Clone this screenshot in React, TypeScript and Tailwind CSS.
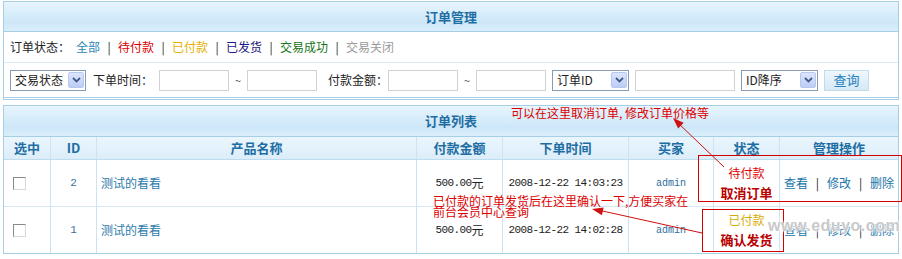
import React from "react";

const STATUS_LINKS = [
  { label: "全部", color: "text-[#2b87b5]" },
  { label: "待付款", color: "text-[#d80000]" },
  { label: "已付款", color: "text-[#e3b100]" },
  { label: "已发货", color: "text-[#191980]" },
  { label: "交易成功", color: "text-[#17761a]" },
  { label: "交易关闭", color: "text-[#9b9b9b]" },
];

const ORDERS = [
  {
    id: 2,
    name: "测试的看看",
    amount: "500.00",
    time: "2008-12-22 14:03:23",
    buyer: "admin",
    status: "待付款",
    statusColor: "text-[#e00000]",
    action: "取消订单",
  },
  {
    id: 1,
    name: "测试的看看",
    amount: "500.00",
    time: "2008-12-22 14:02:28",
    buyer: "admin",
    status: "已付款",
    statusColor: "text-[#d9ab00]",
    action: "确认发货",
  },
];

const COLS = "grid grid-cols-[46px_46px_320px_86px_126px_85px_66px_119px]";
const MONO = "font-['Liberation_Mono','DejaVu_Sans_Mono',monospace]";
const CELL = "flex items-center border-l border-[#cbe3f2]";

function Chevron() {
  return (
    <svg width="9" height="6" viewBox="0 0 9 6">
      <path d="M1 1 L4.5 4.5 L8 1" fill="none" stroke="#42598a" strokeWidth="1.8" />
    </svg>
  );
}

function FakeSelect({ label, width }: { label: string; width: string }) {
  return (
    <div
      className={`flex h-[21px] items-center justify-between border border-[#8a9bb5] bg-white pl-[4px] pr-[1px] ${width}`}
    >
      <span className="leading-none">{label}</span>
      <span className="flex h-[16px] w-[16px] items-center justify-center rounded-[2px] border border-[#b6c8ef] bg-[linear-gradient(#dbe5fc,#bccdf5)]">
        <Chevron />
      </span>
    </div>
  );
}

function TextBox({ width }: { width: string }) {
  return <div className={`h-[21px] border border-[#d2d2d2] bg-white ${width}`} />;
}

// arrow head triangle, tip at (tx,ty), line coming from (fx,fy)
function arrowHead(tx: number, ty: number, fx: number, fy: number, len = 11, half = 4) {
  const dx = tx - fx;
  const dy = ty - fy;
  const d = Math.hypot(dx, dy);
  const ux = dx / d;
  const uy = dy / d;
  const bx = tx - ux * len;
  const by = ty - uy * len;
  return `${tx},${ty} ${bx - uy * half},${by + ux * half} ${bx + uy * half},${by - ux * half}`;
}

export default function App() {
  return (
    <div className="relative h-[259px] w-[902px] overflow-hidden bg-white px-[3px] pt-[1px] font-['Noto_Sans_CJK_SC',sans-serif] text-[12px] text-[#222]">
      {/* 订单管理 */}
      <div className="border border-b-[3px] border-[#a6cfe6] [border-bottom-style:double]">
        <div className="flex h-[30px] items-center justify-center border-b border-[#a6cfe6] bg-[linear-gradient(#e7f5fd,#cde7f8_70%,#d9eefa)] text-[13px] font-bold text-[#1f6ea3]">
          订单管理
        </div>
        <div className="flex h-[31px] items-center border-b border-[#dbecf6] pl-[6px]">
          <span className="mr-[6px] w-[60px]">订单状态：</span>
          {STATUS_LINKS.map((item, i) => (
            <React.Fragment key={item.label}>
              {i > 0 && <span className="w-[18px] text-center">|</span>}
              <span className={item.color}>{item.label}</span>
            </React.Fragment>
          ))}
        </div>
        <div className="flex h-[34px] items-center pl-[6px]">
          <FakeSelect label="交易状态" width="w-[76px]" />
          <span className="ml-[7px] w-[60px]">下单时间：</span>
          <div className="ml-[6px]">
            <TextBox width="w-[70px]" />
          </div>
          <span className="w-[18px] text-center text-[11px] text-[#555]">~</span>
          <TextBox width="w-[70px]" />
          <span className="ml-[11px] w-[60px]">付款金额：</span>
          <TextBox width="w-[70px]" />
          <span className="w-[18px] text-center text-[11px] text-[#555]">~</span>
          <TextBox width="w-[70px]" />
          <div className="ml-[6px]">
            <FakeSelect label="订单ID" width="w-[77px]" />
          </div>
          <div className="ml-[6px]">
            <TextBox width="w-[100px]" />
          </div>
          <div className="ml-[6px]">
            <FakeSelect label="ID降序" width="w-[77px]" />
          </div>
          <button className="ml-[6px] flex h-[21px] w-[45px] items-center justify-center border border-[#c3dcec] bg-[linear-gradient(#eef7fc,#d5e9f6)] text-[13px] text-[#2680bd]">
            查询
          </button>
        </div>
      </div>

      {/* 订单列表 */}
      <div className="mt-[5px] border border-[#a6cfe6]">
        <div className="flex h-[31px] items-center justify-center border-b border-[#a6cfe6] bg-[linear-gradient(#e7f5fd,#cde7f8_70%,#d9eefa)] text-[13px] font-bold text-[#1f6ea3]">
          订单列表
        </div>
        <div className={`${COLS} h-[23px] border-b border-[#bcdcef] bg-[linear-gradient(#eaf6fd,#dcedf9)] text-[13px] font-bold text-[#1e6ea4]`}>
          <div className="flex items-center justify-center">选中</div>
          <div className={`${CELL} justify-center`}>ID</div>
          <div className={`${CELL} justify-center`}>产品名称</div>
          <div className={`${CELL} justify-center`}>付款金额</div>
          <div className={`${CELL} justify-center`}>下单时间</div>
          <div className={`${CELL} justify-center`}>买家</div>
          <div className={`${CELL} justify-center`}>状态</div>
          <div className={`${CELL} justify-center`}>管理操作</div>
        </div>
        {ORDERS.map((order, i) => (
          <div
            key={order.id}
            className={`${COLS} ${i === 0 ? "h-[47px] border-b border-[#d3e7f4]" : "h-[46px]"}`}
          >
            <div className="flex items-center pl-[9px]">
              <span className="h-[13px] w-[13px] border border-t-[#8a8a8a] border-l-[#8a8a8a] border-r-[#d8d8d8] border-b-[#d8d8d8] bg-white" />
            </div>
            <div className={`${CELL} justify-center ${MONO} text-[11px] text-[#3a6f99]`}>{order.id}</div>
            <div className={`${CELL} pl-[4px] text-[#2c7bab]`}>{order.name}</div>
            <div className={`${CELL} justify-center`}>
              <span className={`${MONO} text-[11px] tracking-[-0.6px]`}>{order.amount}</span>元
            </div>
            <div className={`${CELL} justify-center ${MONO} text-[11px] tracking-[-0.6px]`}>{order.time}</div>
            <div className={`${CELL} justify-center ${MONO} text-[10px] text-[#2d6d9c]`}>{order.buyer}</div>
            <div className={`${CELL} flex-col justify-center gap-[6px]`}>
              <span className={`leading-[14px] ${order.statusColor}`}>{order.status}</span>
              <span className="text-[13px] font-bold leading-[14px] text-[#b80000]">{order.action}</span>
            </div>
            <div className={`${CELL} justify-center text-[#2174aa]`}>
              查看<span className="w-[19px] text-center text-[#222]">|</span>修改
              <span className="w-[19px] text-center text-[#222]">|</span>删除
            </div>
          </div>
        ))}
      </div>

      {/* annotations */}
      <div className="absolute left-[511px] top-[105px] leading-[16px] text-[#dd0000]">
        可以在这里取消订单, 修改订单价格等
      </div>
      <div className="absolute left-[433px] top-[195px] leading-[11px] text-[#dd0000]">
        已付款的订单发货后在这里确认一下,方便买家在
        <br />
        前台会员中心查询
      </div>
      <div className="absolute left-[698px] top-[155px] h-[47px] w-[204px] border border-[#d40000]" />
      <div className="absolute left-[702px] top-[209px] h-[43px] w-[82px] border border-[#d40000]" />
      <div className="absolute left-[768px] top-[214px] font-['Liberation_Sans',sans-serif] text-[16px] font-bold tracking-[0.5px] text-[rgba(196,196,196,0.92)] [text-shadow:0_0_2px_#fff,0_0_2px_#fff,0_0_3px_#fff]">
        www.eduyo.com
      </div>
      <svg className="pointer-events-none absolute left-0 top-0" width="902" height="259">
        <line x1="724" y1="167" x2="677" y2="122" stroke="#d01010" strokeWidth="1" />
        <polygon points={arrowHead(673, 118, 724, 167)} fill="#d01010" />
        <line x1="702" y1="233" x2="598" y2="210" stroke="#d01010" strokeWidth="1" />
        <polygon points={arrowHead(592, 209, 702, 233)} fill="#d01010" />
      </svg>
    </div>
  );
}
